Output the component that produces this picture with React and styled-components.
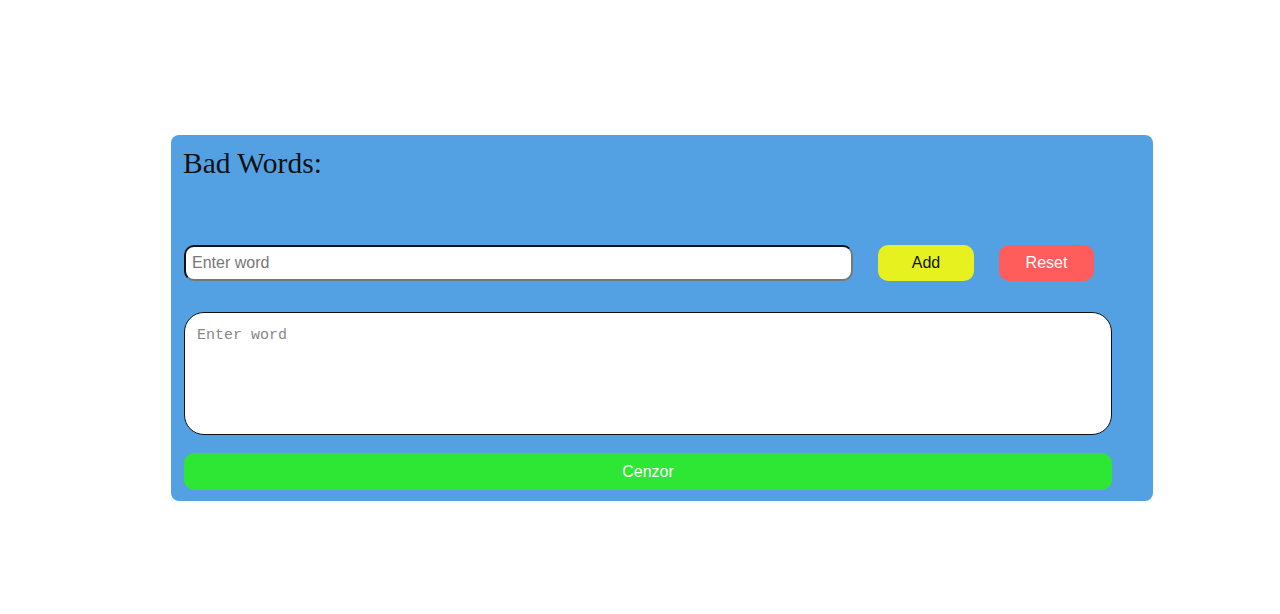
import React from "react"
import styled, { createGlobalStyle } from "styled-components"

const Global = createGlobalStyle`
  body {
    margin: 0;
    background: #fff;
    font-family: "Liberation Serif", serif;
  }
`

const Page = styled.div`
  display: flex;
  padding-top: 135px;
  padding-left: 171px;
`

const Panel = styled.div`
  width: 982px;
  box-sizing: border-box;
  background: #53a1e3;
  border-radius: 8px;
  padding: 12px 41px 11px 13px;
  display: flex;
  flex-direction: column;
`

const Title = styled.h2`
  margin: 0 0 66px -1px;
  font-family: "Liberation Serif", serif;
  font-weight: normal;
  font-size: 29.5px;
  line-height: 32px;
  color: #111;
`

const Row = styled.div`
  display: flex;
  align-items: center;
  gap: 25px;
`

const WordInput = styled.input`
  width: 669px;
  height: 36px;
  box-sizing: border-box;
  border: 2px solid;
  border-color: #111 #777 #777 #111;
  border-radius: 10px;
  padding: 0 6px;
  font-family: "Liberation Sans", Arial, sans-serif;
  font-size: 16px;
  background: #fff;
  outline: none;

  &::placeholder {
    color: #777;
  }
`

const Button = styled.button`
  width: ${p => p.$width || "96px"};
  height: ${p => p.$height || "36px"};
  border: none;
  border-radius: 10px;
  background: ${p => p.$bg};
  color: ${p => p.$color || "#fff"};
  font-family: "Liberation Sans", Arial, sans-serif;
  font-size: 16px;
  cursor: pointer;
  padding: 0;
`

const TextArea = styled.textarea`
  margin-top: 31px;
  width: 928px;
  height: 123px;
  box-sizing: border-box;
  border: 1px solid #111;
  border-radius: 20px;
  padding: 14px 12px;
  font-family: "Liberation Mono", monospace;
  font-size: 15px;
  resize: none;
  outline: none;

  &::placeholder {
    color: #888;
  }
`

const SubmitRow = styled.div`
  margin-top: 18px;
`

export default function App() {
  return (
    <>
      <Global />
      <Page>
        <Panel>
          <Title>Bad Words:</Title>
          <Row>
            <WordInput placeholder="Enter word" />
            <Button $bg="#e6f11f" $color="#111">Add</Button>
            <Button $bg="#ff5c5c" $width="95px">Reset</Button>
          </Row>
          <TextArea placeholder="Enter word" />
          <SubmitRow>
            <Button $bg="#2ee634" $width="928px" $height="37px">Cenzor</Button>
          </SubmitRow>
        </Panel>
      </Page>
    </>
  )
}
